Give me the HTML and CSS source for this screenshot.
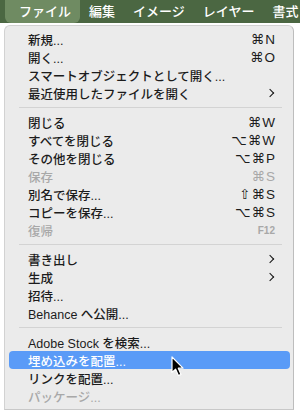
FILE: index.html
```html
<!DOCTYPE html>
<html lang="ja">
<head>
  <meta charset="UTF-8" />
  <meta name="viewport" content="width=device-width, initial-scale=1.0"/>
  <title>ファイル</title>
  <link rel="stylesheet" href="styles.css">
</head>
<body>

  <div class="menubar">
    <span class="bar-item open">ファイル</span>
    <span class="bar-item">編集</span>
    <span class="bar-item">イメージ</span>
    <span class="bar-item">レイヤー</span>
    <span class="bar-item">書式</span>
  </div>

  <div class="menu">
    <div class="row"><span>新規...</span><span class="key">⌘N</span></div>
    <div class="row"><span>開く...</span><span class="key">⌘O</span></div>
    <div class="row"><span>スマートオブジェクトとして開く...</span></div>
    <div class="row"><span>最近使用したファイルを開く</span><span class="sub"></span></div>
    <div class="sep"></div>
    <div class="row"><span>閉じる</span><span class="key">⌘W</span></div>
    <div class="row"><span>すべてを閉じる</span><span class="key">⌥⌘W</span></div>
    <div class="row"><span>その他を閉じる</span><span class="key">⌥⌘P</span></div>
    <div class="row off"><span>保存</span><span class="key">⌘S</span></div>
    <div class="row"><span>別名で保存...</span><span class="key">⇧⌘S</span></div>
    <div class="row"><span>コピーを保存...</span><span class="key">⌥⌘S</span></div>
    <div class="row off"><span>復帰</span><span class="key fkey">F12</span></div>
    <div class="sep"></div>
    <div class="row"><span>書き出し</span><span class="sub"></span></div>
    <div class="row"><span>生成</span><span class="sub"></span></div>
    <div class="row"><span>招待...</span></div>
    <div class="row"><span>Behance へ公開...</span></div>
    <div class="sep"></div>
    <div class="row"><span>Adobe Stock を検索...</span></div>
    <div class="row hover">
      <span>埋め込みを配置...</span>
      <svg class="cursor" width="14" height="21" viewBox="0 0 14 21">
        <path d="M1 1 L1 16.5 L4.6 13.2 L7.4 19.6 L10 18.4 L7.3 12.2 L12 12.2 Z" fill="#000" stroke="#fff" stroke-width="1.2" stroke-linejoin="round"/>
      </svg>
    </div>
    <div class="row"><span>リンクを配置...</span></div>
    <div class="row off"><span>パッケージ...</span></div>
  </div>

</body>
</html>
```

FILE: styles.css
```css
body {
  margin: 0;
  background: #fff;
  font-family: "Liberation Sans", "Noto Sans CJK JP", sans-serif;
  color: #1c1c1c;
}

.menubar {
  display: flex;
  height: 23px;
  background: #4b6742;
  padding-left: 5px;
  overflow: hidden;
  white-space: nowrap;
}

.bar-item {
  color: #fff;
  font-size: 13px;
  font-weight: 500;
  line-height: 23px;
  padding: 0 9px;
}

.bar-item.open {
  background: #6f8b62;
  border-radius: 0 0 6px 6px;
  padding: 0 9px 0 14px;
}

.menu {
  position: relative;
  box-sizing: border-box;
  margin: 2px 0 0 4px;
  width: 290px;
  background: #ebebeb;
  border: 1px solid #d2d2d2;
  border-right-color: #bdbdbd;
  border-bottom-color: #c8c8c8;
  border-radius: 6px 6px 0 0;
  padding: 4px 3px 4px 4px;
}

.row {
  position: relative;
  display: flex;
  justify-content: space-between;
  align-items: center;
  height: 18px;
  padding: 0 15px 0 19px;
  font-size: 12.5px;
  font-weight: 500;
  border-radius: 4px;
  white-space: nowrap;
}

.row.off {
  color: #a8a8a8;
}

.row.hover {
  background: #5a9bf7;
  color: #fff;
}

.key {
  font-family: "Liberation Sans", "DejaVu Sans", sans-serif;
  font-size: 13.5px;
  font-weight: normal;
  letter-spacing: 1px;
  margin-right: -1px;
}

.fkey {
  font-weight: bold;
  font-size: 10px;
  letter-spacing: 0;
  margin-right: 0;
}

.sub {
  width: 5px;
  height: 5px;
  border-right: 1.8px solid #111;
  border-bottom: 1.8px solid #111;
  transform: rotate(-45deg);
  margin-right: 2px;
}

.sep {
  height: 1px;
  background: #d3d3d3;
  margin: 5px 8px 5px 10px;
}

.cursor {
  position: absolute;
  left: 162px;
  top: 5px;
}
```
